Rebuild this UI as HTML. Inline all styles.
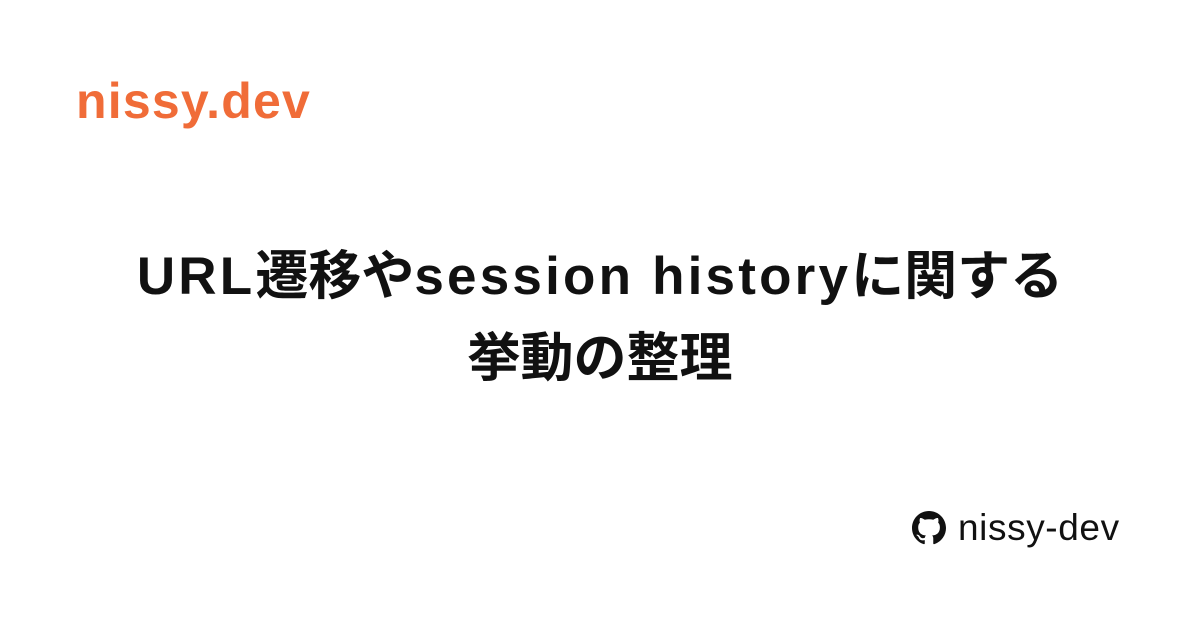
<!DOCTYPE html>
<html><head><meta charset="utf-8"><style>
html,body{margin:0;padding:0;background:#fff;width:1200px;height:630px;overflow:hidden}
body{position:relative;font-family:"Liberation Sans","Noto Sans CJK JP",sans-serif}
.logo{position:absolute;left:76px;top:71px;font-size:50px;font-weight:700;color:#f06c38;line-height:60px;letter-spacing:1.2px}
.title{position:absolute;left:0;right:0;top:236px;text-align:center;font-size:53px;font-weight:700;color:#111;line-height:82px}
.title .l{letter-spacing:3.2px}
.foot{position:absolute;left:912px;top:506px;display:flex;align-items:center;font-size:37px;color:#111;line-height:44px;letter-spacing:0.6px}
.foot svg{margin-right:12px}
</style></head><body>
<div class="logo">nissy.dev</div>
<div class="title"><span class="l">URL</span>遷移や<span class="l">session history</span>に関する<br>挙動の整理</div>
<div class="foot"><svg width="34" height="34" viewBox="0 0 16 16"><path fill="#111" d="M8 0C3.58 0 0 3.58 0 8c0 3.540 2.29 6.53 5.47 7.59.4.07.55-.17.55-.38 0-.19-.01-.82-.01-1.49-2.01.37-2.53-.49-2.690-.94-.09-.23-.48-.94-.82-1.13-.28-.15-.68-.52-.01-.53.63-.01 1.08.58 1.23.82.72 1.21 1.87.87 2.33.66.07-.52.28-.87.51-1.07-1.78-.2-3.64-.89-3.64-3.95 0-.87.31-1.59.82-2.15-.08-.2-.36-1.02.08-2.12 0 0 .67-.21 2.2.82.64-.18 1.32-.27 2-.27.68 0 1.36.09 2 .27 1.53-1.04 2.2-.82 2.2-.82.44 1.1.16 1.92.08 2.12.51.56.82 1.27.82 2.15 0 3.07-1.87 3.75-3.65 3.95.29.25.54.73.54 1.48 0 1.07-.01 1.93-.01 2.2 0 .21.15.46.55.38A8.013 8.013 0 0 0 16 8c0-4.42-3.58-8-8-8z"/></svg>nissy-dev</div>
</body></html>
